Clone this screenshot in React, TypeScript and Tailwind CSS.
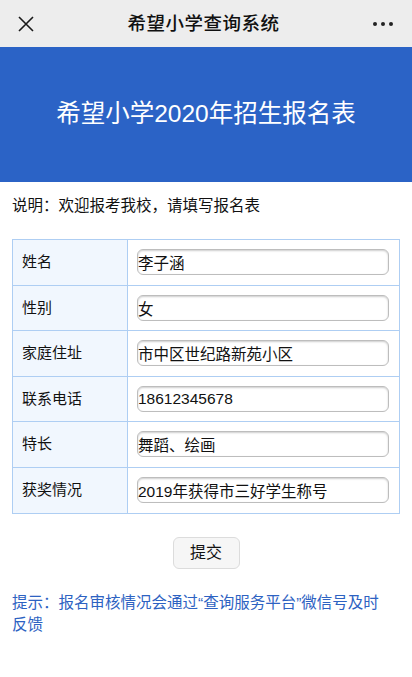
const rows = [
  { label: "姓名", value: "李子涵" },
  { label: "性别", value: "女" },
  { label: "家庭住址", value: "市中区世纪路新苑小区" },
  { label: "联系电话", value: "18612345678" },
  { label: "特长", value: "舞蹈、绘画" },
  { label: "获奖情况", value: "2019年获得市三好学生称号" },
];

const font = { fontFamily: '"Liberation Sans", "Noto Sans CJK SC", sans-serif' };

export default function App() {
  return (
    <div className="min-h-[677px] bg-white text-[#111]" style={font}>
      <header className="flex h-[47px] items-center justify-between bg-[#ededed] px-[18px]">
        <svg width="16" height="16" viewBox="0 0 16 16" className="text-[#1a1a1a]">
          <path d="M1 1 L15 15 M15 1 L1 15" stroke="currentColor" strokeWidth="1.6" fill="none" />
        </svg>
        <h1 className="text-[18.5px] font-medium tracking-[0.5px]">希望小学查询系统</h1>
        <div className="flex gap-[4px] pr-[1px]">
          <span className="h-[4px] w-[4px] rounded-full bg-[#222]" />
          <span className="h-[4px] w-[4px] rounded-full bg-[#222]" />
          <span className="h-[4px] w-[4px] rounded-full bg-[#222]" />
        </div>
      </header>

      <section className="flex h-[135px] items-center justify-center bg-[#2b63c6]">
        <h2 className="text-[24.5px] text-white">希望小学2020年招生报名表</h2>
      </section>

      <p className="mx-3 mt-[13px] text-[15.5px] leading-[22px]">说明：欢迎报考我校，请填写报名表</p>

      <div className="mx-3 mt-[22px] border border-[#aecef3]">
        {rows.map((row, i) => (
          <div
            key={row.label}
            className={`flex h-[45.5px] ${i < rows.length - 1 ? "border-b border-[#aecef3]" : ""}`}
          >
            <div className="flex w-[115px] items-center border-r border-[#aecef3] bg-[#f1f7fe] pl-[9px] text-[15px]">
              {row.label}
            </div>
            <div className="flex flex-1 items-center pl-[9px] pr-[10px]">
              <input
                readOnly
                value={row.value}
                className="h-[26px] w-full rounded-[6px] border border-[#bdbdbd] px-0 text-[15.5px] text-[#111] shadow-[inset_0_1px_2px_rgba(0,0,0,0.2)] outline-none"
                style={font}
              />
            </div>
          </div>
        ))}
      </div>

      <div className="mt-[23px] flex justify-center">
        <button className="h-[32px] w-[67px] rounded-[6px] border border-[#dcdcdc] bg-[#f6f6f6] text-[16px] text-[#111]" style={font}>
          提交
        </button>
      </div>

      <p className="ml-3 mr-[24px] mt-[23px] text-[15.5px] leading-[22px] text-[#2d62c2]">
        提示：报名审核情况会通过“查询服务平台”微信号及时反馈
      </p>
    </div>
  );
}
